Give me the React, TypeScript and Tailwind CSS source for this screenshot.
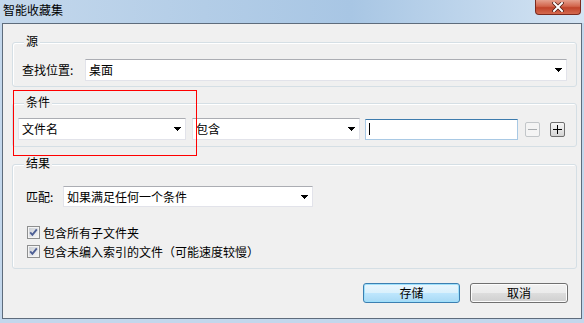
import type { ReactNode } from 'react';

const font = "font-['Noto_Sans_CJK_SC','Noto_Sans',sans-serif]";

function Arrow() {
  return (
    <svg width="7" height="4" viewBox="0 0 7 4" shapeRendering="crispEdges">
      <rect x="0" y="0" width="7" height="1" fill="#000" />
      <rect x="1" y="1" width="5" height="1" fill="#000" />
      <rect x="2" y="2" width="3" height="1" fill="#000" />
      <rect x="3" y="3" width="1" height="1" fill="#000" />
    </svg>
  );
}

function Combo({ text, className }: { text: string; className: string }) {
  return (
    <div
      className={`flex items-center justify-between border border-[#e2e3ea] border-t-[#abadb3] bg-white pl-[3px] pr-[4px] leading-[12px] ${className}`}
    >
      <span>{text}</span>
      <Arrow />
    </div>
  );
}

function Group({ label, className, children }: { label: string; className: string; children: ReactNode }) {
  return (
    <div className={`relative rounded-[3px] border border-[#d5dfe5] shadow-[inset_1px_1px_0_#fff] ${className}`}>
      <span className="absolute -top-[8px] left-[11px] bg-[#f0f0f0] px-[2px] leading-[12px]">{label}</span>
      {children}
    </div>
  );
}

function Check({ label }: { label: string }) {
  return (
    <div className="ml-[1px] flex h-[13px] items-center gap-[3px] leading-[12px]">
      <svg width="13" height="13" viewBox="0 0 13 13">
        <defs>
          <linearGradient id="cb" x1="0" y1="0" x2="1" y2="1">
            <stop offset="0" stopColor="#cbcfd5" />
            <stop offset="1" stopColor="#f6f6f6" />
          </linearGradient>
        </defs>
        <rect x="0.5" y="0.5" width="12" height="12" fill="#f4f4f4" stroke="#8e8f8f" />
        <rect x="2" y="2" width="9" height="9" fill="url(#cb)" />
        <path d="M3.2 6.4 L5.4 8.8 L9.8 3.4" stroke="#4d5f95" strokeWidth="1.9" fill="none" />
      </svg>
      <span>{label}</span>
    </div>
  );
}

export default function App() {
  return (
    <div className={`relative h-[323px] w-[584px] overflow-hidden bg-[#c3d7ec] text-[12px] text-black ${font}`}>
      {/* title bar */}
      <div className="flex h-[23px] items-start justify-between bg-[linear-gradient(90deg,#c4d8ec,#b3cde7_35%,#a8c6e4_60%,#d4e4f3)]">
        <span className="ml-[3px] mt-[4px] leading-[12px]">智能收藏集</span>
        <div className="mr-[3px] flex h-[15px] w-[46px] items-center justify-center rounded-b-[4px] border border-t-0 border-[#7b2a1e] bg-[linear-gradient(180deg,#e5a08e,#d2654c_45%,#c0432a_55%,#d46a4f)]">
          <svg width="12" height="10" viewBox="0 0 12 10">
            <path d="M2 1 L10 9 M10 1 L2 9" stroke="#4a1a12" strokeWidth="3.4" strokeLinecap="square" />
            <path d="M2 1 L10 9 M10 1 L2 9" stroke="#fff" strokeWidth="2" strokeLinecap="square" />
          </svg>
        </div>
      </div>

      {/* dialog body */}
      <div className="ml-[2px] h-[296px] w-[580px] border border-[#5e6c7c] bg-[#f0f0f0] pl-[9px] pr-[4px] pt-[18px]">
        <Group label="源" className="pb-[5px] pl-[9px] pr-[9px] pt-[16px]">
          <div className="flex items-center">
            <span className="w-[63px] leading-[12px]">查找位置:</span>
            <Combo text="桌面" className="h-[22px] flex-1" />
          </div>
        </Group>

        <Group label="条件" className="mt-[16px] pb-[6px] pl-[5px] pt-[14px]">
          <div className="flex items-center">
            <Combo text="文件名" className="h-[22px] w-[168px]" />
            <Combo text="包含" className="ml-[6px] h-[22px] w-[168px]" />
            <div className="ml-[5px] flex h-[21px] w-[153px] items-center border border-[#a9c9e4] border-t-[#3d7bad] bg-white pl-[3px]">
              <div className="h-[12px] w-px bg-black" />
            </div>
            <div className="ml-[7px] flex h-[15px] w-[15px] items-center justify-center rounded-[2px] border border-[#c2c6c9] bg-[#f4f4f4]">
              <svg width="9" height="9" viewBox="0 0 9 9" shapeRendering="crispEdges">
                <rect x="0" y="4" width="9" height="1" fill="#a8acaf" />
              </svg>
            </div>
            <div className="ml-[10px] flex h-[15px] w-[15px] items-center justify-center rounded-[2px] border border-[#6f6f6f] bg-[linear-gradient(180deg,#f6f6f6,#e6e6e6_50%,#d4d4d4)]">
              <svg width="9" height="9" viewBox="0 0 9 9" shapeRendering="crispEdges">
                <rect x="0" y="4" width="9" height="1" fill="#000" />
                <rect x="4" y="0" width="1" height="9" fill="#000" />
              </svg>
            </div>
          </div>
        </Group>

        <Group label="结果" className="mt-[17px] pb-[10px] pl-[13px] pt-[21px]">
          <div className="flex items-center">
            <span className="w-[37px] leading-[12px]">匹配:</span>
            <Combo text="如果满足任何一个条件" className="h-[21px] w-[250px]" />
          </div>
          <div className="mt-[19px] flex flex-col gap-[6px]">
            <Check label="包含所有子文件夹" />
            <Check label="包含未编入索引的文件（可能速度较慢）" />
          </div>
        </Group>

        <div className="mr-[9px] mt-[14px] flex justify-end gap-[10px]">
          <div className="flex h-[20px] w-[97px] items-center justify-center rounded-[3px] border border-[#3c7fb1] bg-[linear-gradient(180deg,#eaf6fd,#d9f0fc_50%,#bee6fd_51%,#a7d9f5)] leading-[12px] shadow-[inset_0_0_0_1px_#9fe0fb]">
            存储
          </div>
          <div className="flex h-[20px] w-[98px] items-center justify-center rounded-[3px] border border-[#707070] bg-[linear-gradient(180deg,#f2f2f2,#ebebeb_50%,#dddddd_51%,#cfcfcf)] leading-[12px] shadow-[inset_0_0_0_1px_#fcfcfc]">
            取消
          </div>
        </div>
      </div>

      {/* red annotation frame */}
      <div className="pointer-events-none absolute left-[13px] top-[90px] h-[66px] w-[184px] border border-[#ff0000]" />
    </div>
  );
}
